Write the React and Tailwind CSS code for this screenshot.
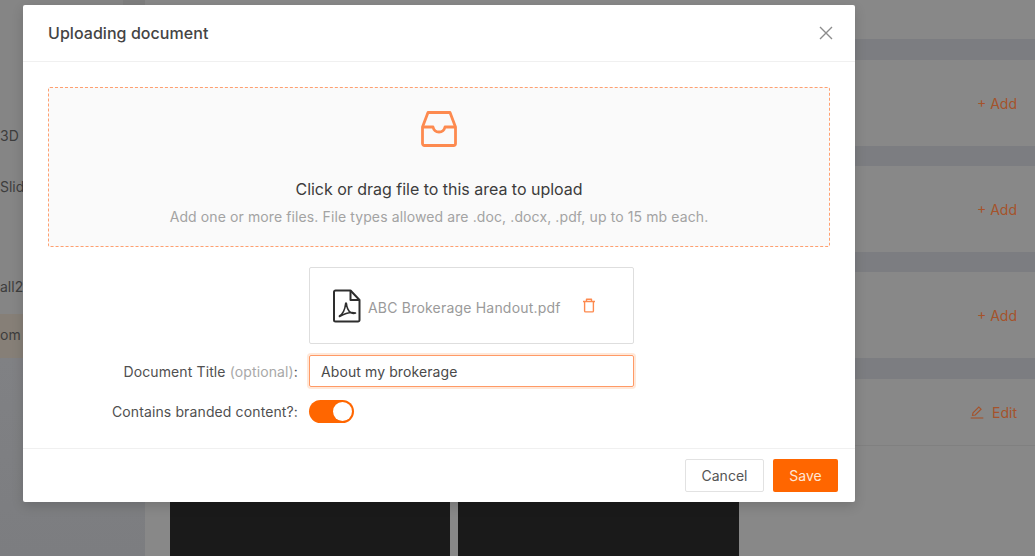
import React from "react";

function BackRow({ action, icon, h }) {
  return (
    <div className={`flex items-center justify-end pr-[18px] text-[14px] text-[#a5532b] ${h}`}>
      {icon}
      <span>{action}</span>
    </div>
  );
}

function Band({ h = "h-[21px]" }) {
  return <div className={`${h} bg-[#7c7d81]`} />;
}

function Background() {
  return (
    <div className="flex h-[556px] w-[1035px] overflow-hidden bg-[#888888] text-[14px] text-[#3d3d3d]">
      <div className="flex w-[145px] shrink-0 flex-col bg-[#858585]">
        <div className="ml-[123px] h-[5px] w-[22px] shrink-0 bg-[#7e7e7e]" />
        <div className="h-[122px] shrink-0" />
        <div className="flex h-[18px] items-center leading-none">3D T</div>
        <div className="h-[32px] shrink-0" />
        <div className="flex h-[18px] items-center">Slide</div>
        <div className="h-[82px] shrink-0" />
        <div className="flex h-[18px] items-center whitespace-nowrap">all2A</div>
        <div className="h-[19px] shrink-0" />
        <div className="flex h-[44px] items-center bg-[#867f77] pb-[4px] whitespace-nowrap">om I</div>
        <div className="flex-1 bg-gradient-to-b from-[#808184] to-[#7c7d80]" />
      </div>
      <div className="flex flex-1 flex-col">
        <div className="h-[39px] shrink-0" />
        <Band />
        <BackRow h="h-[86px]" action="+ Add" />
        <Band h="h-[20px]" />
        <BackRow h="h-[86px]" action="+ Add" />
        <Band h="h-[20px]" />
        <BackRow h="h-[86px]" action="+ Add" />
        <Band h="h-[21px]" />
        <div className="border-b border-[#808080]">
          <BackRow
            h="h-[66px]"
            action="Edit"
            icon={
              <svg className="mr-[8px]" width="14" height="14" viewBox="0 0 14 14" fill="none" stroke="#a5532b" strokeWidth="1.1">
                <path d="M2.5 10.3 3 7.8 8.8 2l2.3 2.2-5.8 5.8-2.8.3Z" />
                <path d="M.7 13h12.600" />
              </svg>
            }
          />
        </div>
        <div className="flex flex-1 gap-[8px] pl-[25px] pt-[20px]">
          <div className="h-full w-[280px] bg-[#1a1a1a]" />
          <div className="h-full w-[281px] bg-[#1a1a1a]" />
        </div>
      </div>
    </div>
  );
}

export default function App() {
  return (
    <div className="relative h-[556px] w-[1035px] overflow-hidden font-['Inter',sans-serif]">
      <Background />
      <div className="absolute left-[23px] top-[5px] flex h-[497px] w-[832px] flex-col rounded-[2px] bg-white shadow-[0_4px_12px_rgba(0,0,0,0.15)]">
        <div className="flex h-[57px] shrink-0 items-center justify-between border-b border-[#f0f0f0] pl-[25px] pr-[22px]">
          <span className="text-[16px] font-medium tracking-[0.05px] text-[#444444]">Uploading document</span>
          <svg width="14" height="14" viewBox="0 0 14 14" fill="none" stroke="#8c8c8c" strokeWidth="1.4">
            <path d="M1 1 13 13M13 1 1 13" />
          </svg>
        </div>
        <div className="flex flex-1 flex-col px-[25px] pt-[25px]">
          <div className="flex h-[160px] w-[782px] shrink-0 flex-col items-center rounded-[2px] border border-dashed border-[#ffa070] bg-[#fafafa] pt-[22px]">
            <svg width="38" height="38" viewBox="0 0 38 38" fill="none" stroke="#fd8a4f" strokeWidth="2.8" strokeLinejoin="round">
              <path d="M8 2.500h22l5.500 14.500v16.500a2 2 0 0 1-2 2h-29a2 2 0 0 1-2-2V17Z" />
              <path d="M2.500 17h10.500c.8 3.500 3 5 6 5s5.200-1.500 6-5h10.500" />
            </svg>
            <div className="mt-[29px] text-[16px] leading-[24px] tracking-[-0.02px] text-[#3c3c3c]">Click or drag file to this area to upload</div>
            <div className="mt-[5px] text-[14px] leading-[22px] tracking-[0.11px] text-[#a3a3a3]">
              Add one or more files. File types allowed are .doc, .docx, .pdf, up to 15 mb each.
            </div>
          </div>
          <div className="ml-[261px] mt-[20px] flex h-[77px] w-[325px] shrink-0 items-center rounded-[2px] border border-[#dedede] pl-[23px]">
            <svg width="28" height="34" viewBox="0 0 28 34" fill="none" stroke="#2e2e2e" strokeWidth="2" strokeLinejoin="round">
              <path d="M2.500 1.500h15l9 9.500v20a1.500 1.500 0 0 1-1.500 1.500H2.500A1.500 1.500 0 0 1 1 31V3a1.500 1.500 0 0 1 1.500-1.500Z" />
              <path d="M17.500 1.500v9.500h9" />
              <path strokeWidth="1.600" d="M6.500 27c3-2 5.500-7 6-11.500 0-2 1-1.500 1-.5 0 3 2 7 4 8.500 2 1 4 1 5 .5-3-1-9-.5-16 3.500Z" />
            </svg>
            <span className="ml-[7px] mt-[3px] text-[14px] tracking-[0.2px] text-[#9a9a9a]">ABC Brokerage Handout.pdf</span>
            <svg className="ml-[21px] mb-[1px]" width="14" height="15" viewBox="0 0 14 15" fill="none" stroke="#fd8a4f" strokeWidth="1.400" strokeLinejoin="round">
              <path d="M1 3.500h12M4.500 3.500V1.200h5v2.300M2.600 3.500v9.400a1 1 0 0 0 1 1h6.800a1 1 0 0 0 1-1V3.500" />
            </svg>
          </div>
          <div className="mt-[11px] flex items-center">
            <div className="w-[261px] pr-[11px] text-right text-[14px] tracking-[0.12px] text-[#505050]">
              Document Title <span className="text-[#a8a8a8]">(optional)</span>:
            </div>
            <div className="flex h-[32px] w-[325px] items-center rounded-[2px] border border-[#ff9a66] pl-[11px] text-[14px] tracking-[0.1px] text-[#4a4a4a] shadow-[0_0_0_2px_rgba(255,102,0,0.15)]">
              About my brokerage
            </div>
          </div>
          <div className="mt-[13px] flex items-center">
            <div className="w-[261px] pr-[11px] text-right text-[14px] tracking-[0.12px] text-[#505050]">Contains branded content?:</div>
            <div className="flex h-[23px] w-[45px] items-center justify-end rounded-full bg-[#ff6600] pr-[2px]">
              <div className="h-[19px] w-[19px] rounded-full bg-white" />
            </div>
          </div>
        </div>
        <div className="flex h-[54px] shrink-0 items-center justify-end gap-[9px] border-t border-[#f0f0f0] pr-[17px]">
          <div className="flex h-[33px] w-[79px] items-center justify-center rounded-[2px] border border-[#e2e2e2] bg-white text-[14px] text-[#555555]">Cancel</div>
          <div className="flex h-[33px] w-[65px] items-center justify-center rounded-[2px] bg-[#ff6600] text-[14px] text-[#ffe6d6]">Save</div>
        </div>
      </div>
    </div>
  );
}
